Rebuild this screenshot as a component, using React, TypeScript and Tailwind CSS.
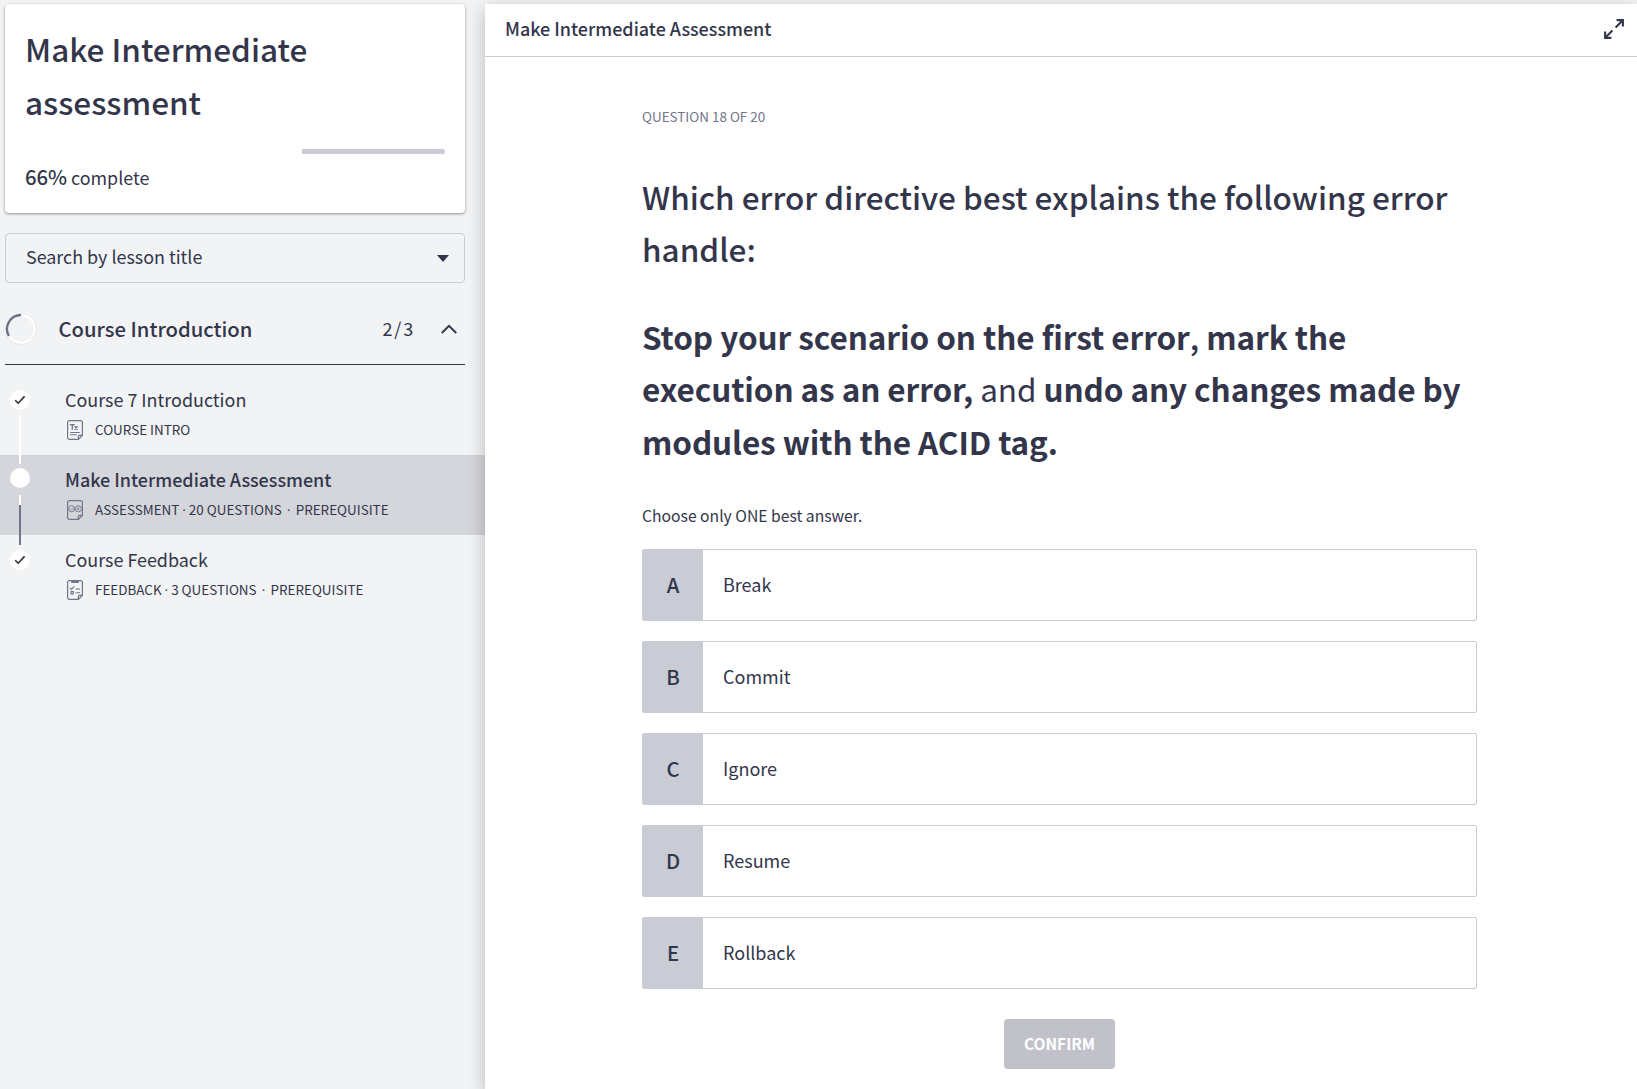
import React from 'react';

const options = [
  ['A', 'Break'],
  ['B', 'Commit'],
  ['C', 'Ignore'],
  ['D', 'Resume'],
  ['E', 'Rollback'],
];

/* Page outline with a folded bottom-right corner, shared by the lesson icons */
function PageIcon({ children }: { children: React.ReactNode }) {
  return (
    <svg width="16" height="20" viewBox="0 0 16 20" fill="none" stroke="#73758a" className="shrink-0">
      <path d="M11.4 19.4H2.4A1.8 1.8 0 0 1 .6 17.6V2.4A1.8 1.8 0 0 1 2.4.6h11.2a1.8 1.8 0 0 1 1.8 1.8v13z" strokeWidth="1.2" />
      <path d="M11.4 19.2v-2.8a1 1 0 0 1 1-1h2.8" strokeWidth="1.2" />
      {children}
    </svg>
  );
}

function TextIcon() {
  return (
    <PageIcon>
      <path d="M2.8 4.6h5M5.3 4.6v5.2M7.6 6.2l3 3.6M10.6 6.2l-3 3.6" strokeWidth="1.3" />
      <path d="M3.2 12.5h9.6M3.2 14.8h6.4" strokeWidth="1.1" />
    </PageIcon>
  );
}

function AssessmentIcon() {
  return (
    <PageIcon>
      <circle cx="4.7" cy="8.8" r="3.1" strokeWidth=".9" />
      <circle cx="11.3" cy="8.8" r="3.1" strokeWidth=".9" />
      <path d="M3.3 8.9l1.2 1.2L7 7.4M9.9 7.5l2.6 2.6M12.5 7.5l-2.6 2.6" strokeWidth=".9" />
    </PageIcon>
  );
}

function FeedbackIcon() {
  return (
    <PageIcon>
      <path d="M4.2 1.5h7.6" strokeWidth="3" />
      <path d="M3 8l1.5 1.4L7.4 6.4M8.6 9h4.4M8.6 12.8H13M4 11.6h2.3v2.3H4z" strokeWidth="1.1" />
    </PageIcon>
  );
}

function Done() {
  return (
    <div className="flex size-5 items-center justify-center rounded-full bg-white">
      <svg width="12" height="10" viewBox="0 0 12 10" fill="none" stroke="#2c2d33" strokeWidth="1.6">
        <path d="M1.2 5.2l3 3L10.6 1.4" />
      </svg>
    </div>
  );
}

function Dot({ wide = false }: { wide?: boolean }) {
  return <span className={wide ? "mx-[5.2px] font-['Open_Sans']" : "mx-[3px] font-['Open_Sans']"}>·</span>;
}

function Lesson(props: {
  title: string;
  active?: boolean;
  icon: React.ReactNode;
  marker: React.ReactNode;
  children: React.ReactNode;
}) {
  return (
    <li className={props.active ? 'flex h-20 bg-[#d5d6db]' : 'flex h-20'}>
      <div className="flex w-10 flex-col items-center">{props.marker}</div>
      <div className="ml-[25px] pt-3">
        <div className={props.active ? 'h-6 text-[17.96px] leading-6 font-medium' : 'h-6 text-[17.93px] leading-6'}>{props.title}</div>
        <div className="mt-[9px] ml-[2px] flex h-5 items-center gap-3">
          {props.icon}
          <span className="h-5 text-[13.45px] leading-[19px] whitespace-nowrap">{props.children}</span>
        </div>
      </div>
    </li>
  );
}

export default function App() {
  return (
    <div className="flex h-[1089px] w-[1637px] overflow-hidden bg-[#f1f3f5] font-['Noto_Sans_CJK_SC',sans-serif] text-[#33364b]">
      <aside className="w-[485px] shrink-0 pt-1">
        <section className="ml-[5px] h-[209px] w-[460px] rounded bg-white px-5 pt-[18px] shadow-[0_1px_3px_rgba(0,0,0,0.4)]">
          <h1 className="w-[330px] text-[31.5px] leading-[53.3px] font-medium">Make Intermediate assessment</h1>
          <div className="mt-5 flex h-[5px] justify-end">
            <div className="h-full w-[143px] rounded-r-full bg-[#c9cbd6]" />
          </div>
          <p className="mt-2 flex h-7 items-baseline text-[17.9px] leading-7">
            <span className="mr-[3.8px] text-[20.3px] font-medium">66%</span>complete
          </p>
        </section>

        <div className="mt-5 ml-[5px] flex h-[50px] w-[460px] items-center justify-between rounded border border-[#c9cbd6] pr-[15px] pl-5 text-[17.9px]">
          <span className="pb-1 leading-6">Search by lesson title</span>
          <svg width="12" height="7" viewBox="0 0 12 7" fill="#33364b">
            <path d="M0 0h12L6 7z" />
          </svg>
        </div>

        <div className="ml-[5px] flex h-[82px] w-[460px] items-center border-b border-[#33364b] pt-[10px]">
          <svg width="32" height="32" viewBox="0 0 32 32" fill="none" className="shrink-0">
            <circle cx="16" cy="16" r="15" stroke="#c3c5cb" strokeWidth=".7" strokeDasharray="2 1.5" />
            <circle cx="16" cy="16" r="13.8" stroke="#fff" strokeWidth="2.2" />
            <path d="M16 2A14 14 0 0 0 3.9 23" stroke="#6f7287" strokeWidth="2.4" />
          </svg>
          <h2 className="ml-[21.5px] flex-1 text-[20.25px] leading-7 font-medium">Course Introduction</h2>
          <span className="pb-px text-[18px] leading-6 tracking-[1.8px]">2/3</span>
          <svg width="16" height="10" viewBox="0 0 16 10" fill="none" stroke="#33364b" strokeWidth="2" className="mr-[8px] ml-[26px]">
            <path d="M.8 9L8 1.8 15.2 9" />
          </svg>
        </div>

        <ul className="mt-[10px]">
          <Lesson
            title="Course 7 Introduction"
            icon={<TextIcon />}
            marker={
              <>
                <div className="h-[15px]" />
                <Done />
                <div className="mt-[5px] w-0.5 flex-1 bg-white" />
              </>
            }
          >
            COURSE INTRO
          </Lesson>
          <Lesson
            title="Make Intermediate Assessment"
            active
            icon={<AssessmentIcon />}
            marker={
              <>
                <div className="h-[9px] w-0.5 bg-white" />
                <div className="mt-1 size-5 rounded-full bg-white" />
                <div className="mt-[7px] h-[10px] w-0.5 bg-white" />
                <div className="w-0.5 flex-1 bg-[#73758a]" />
              </>
            }
          >
            ASSESSMENT<Dot />20 QUESTIONS<Dot wide />PREREQUISITE
          </Lesson>
          <Lesson
            title="Course Feedback"
            icon={<FeedbackIcon />}
            marker={
              <>
                <div className="mb-[5px] h-[10px] w-0.5 bg-[#73758a]" />
                <Done />
              </>
            }
          >
            FEEDBACK<Dot />3 QUESTIONS<Dot wide />PREREQUISITE
          </Lesson>
        </ul>
      </aside>

      <main className="z-10 mt-1 flex-1 bg-white shadow-[0_5px_16px_rgba(0,0,0,0.25)]">
        <header className="flex h-[53px] items-center justify-between border-b border-[#c9cbd6] pr-[13px] pl-5">
          <span className="pb-1 text-[17.96px] leading-6 font-medium">Make Intermediate Assessment</span>
          <svg width="20" height="20" viewBox="0 0 20 20" fill="none" stroke="#33364b" strokeWidth="2.1" className="-mt-0.5">
            <path d="M12.6 1.1h6.3v6.3M18.6 1.4L11.6 8.4M7.4 18.9H1.1v-6.3M1.4 18.6L8.4 11.6" />
          </svg>
        </header>

        <div className="ml-[157px] flex w-[835px] flex-col pt-[49px]">
          <div className="h-5 text-[13.45px] leading-5 text-[#73758a]">QUESTION 18 OF 20</div>
          <div className="mt-[43.6px] text-[31.5px] leading-[52.5px] font-medium">
            <p>
              Which error directive best explains the following error
              <br />
              handle:
            </p>
            <p className="mt-[35px] font-bold whitespace-nowrap">
              <span className="tracking-[-0.07px]">
                Stop your scenario on the first error<span className="font-medium">,</span> mark the
              </span>
              <br />
              <span className="tracking-[-0.09px]">
                execution as an error, <span className="font-normal">and</span> undo any changes made by
                <br />
                modules with the ACID tag.
              </span>
            </p>
          </div>
          <p className="mt-[36.9px] h-6 text-[15.7px] leading-6">Choose only ONE best answer.</p>

          <ul className="mt-[21px] flex flex-col gap-5">
            {options.map(([letter, label]) => (
              <li key={letter} className="flex h-[72px] overflow-hidden rounded-xs border border-[#c9cbd6]">
                <span className="flex w-[60px] items-center justify-center bg-[#c9cbd5] pb-0.5 text-[20.3px] leading-7 font-medium">{letter}</span>
                <span className="flex items-center pb-0.5 pl-5 text-[18px] leading-6">{label}</span>
              </li>
            ))}
          </ul>

          <button className="mt-[30px] h-[50px] w-[111px] self-center rounded bg-[#c1c2c9] text-[15.5px] font-bold text-white">CONFIRM</button>
        </div>
      </main>
    </div>
  );
}
